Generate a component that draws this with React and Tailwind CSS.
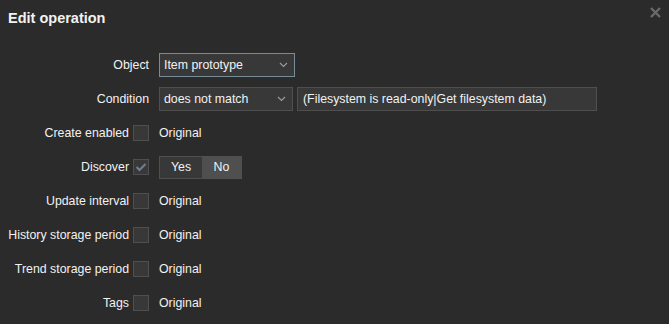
import React from 'react';

const Chevron = () => (
    <svg width="9" height="6" viewBox="0 0 9 6" className="shrink-0">
        <path d="M1 1 L4.5 4.5 L8 1" fill="none" stroke="#9a9a9a" strokeWidth="1.2" />
    </svg>
);

const Select = ({ value, width, focused }) => (
    <div
        className={`h-[24px] ${width} flex items-center justify-between pl-[4px] pr-[6px] bg-[#383838] border ${focused ? 'border-[#768d99]' : 'border-[#4f4f4f]'}`}
    >
        <span>{value}</span>
        <Chevron />
    </div>
);

const Checkbox = ({ checked }) => (
    <div className="w-[16px] h-[16px] border border-[#4f4f4f] bg-[#383838] flex items-center justify-center">
        {checked && (
            <svg width="12" height="10" viewBox="0 0 12 10">
                <path d="M1.5 5 L4.5 8 L10.5 2" fill="none" stroke="#6f8190" strokeWidth="2" />
            </svg>
        )}
    </div>
);

const Row = ({ label, checkbox, checked, children }) => (
    <div className="flex items-center h-[24px]">
        <div className="w-[149px] flex items-center justify-end gap-[4px] shrink-0">
            <span className="whitespace-nowrap">{label}</span>
            {checkbox && <Checkbox checked={checked} />}
        </div>
        <div className="ml-[10px] flex items-center gap-[4px]">{children}</div>
    </div>
);

const App = () => {
    const overrides = ['Update interval', 'History storage period', 'Trend storage period', 'Tags'];

    return (
        <div
            className="w-[669px] h-[324px] bg-[#2b2b2b] text-[#f2f2f2] text-[12.35px] overflow-hidden"
            style={{ fontFamily: '"Liberation Sans", Arial, sans-serif' }}
        >
            {/* Header */}
            <div className="flex items-start justify-between pt-[9px] pl-[8px] pr-[7px]">
                <h4 className="text-[14.5px] leading-[18px] font-bold">Edit operation</h4>
                <button className="-mt-[3px] p-[1px]">
                    <svg width="11" height="11" viewBox="0 0 11 11">
                        <path d="M1 1 L10 10 M10 1 L1 10" stroke="#6a6a6a" strokeWidth="2.4" />
                    </svg>
                </button>
            </div>

            {/* Form */}
            <div className="mt-[26px] flex flex-col gap-[10px]">
                <Row label="Object">
                    <Select value="Item prototype" width="w-[136px]" focused />
                </Row>
                <Row label="Condition">
                    <Select value="does not match" width="w-[134px]" />
                    <div className="h-[24px] w-[300px] flex items-center px-[5px] bg-[#383838] border border-[#4f4f4f]">
                        (Filesystem is read-only|Get filesystem data)
                    </div>
                </Row>
                <Row label="Create enabled" checkbox>
                    <span>Original</span>
                </Row>
                <Row label="Discover" checkbox checked>
                    <div className="flex h-[23px] border border-[#4f4f4f]">
                        <div className="w-[42px] flex items-center justify-center bg-[#383838]">Yes</div>
                        <div className="w-[39px] flex items-center justify-center bg-[#4f4f4f]">No</div>
                    </div>
                </Row>
                {overrides.map((label) => (
                    <Row key={label} label={label} checkbox>
                        <span>Original</span>
                    </Row>
                ))}
            </div>
        </div>
    );
};

export default App;
